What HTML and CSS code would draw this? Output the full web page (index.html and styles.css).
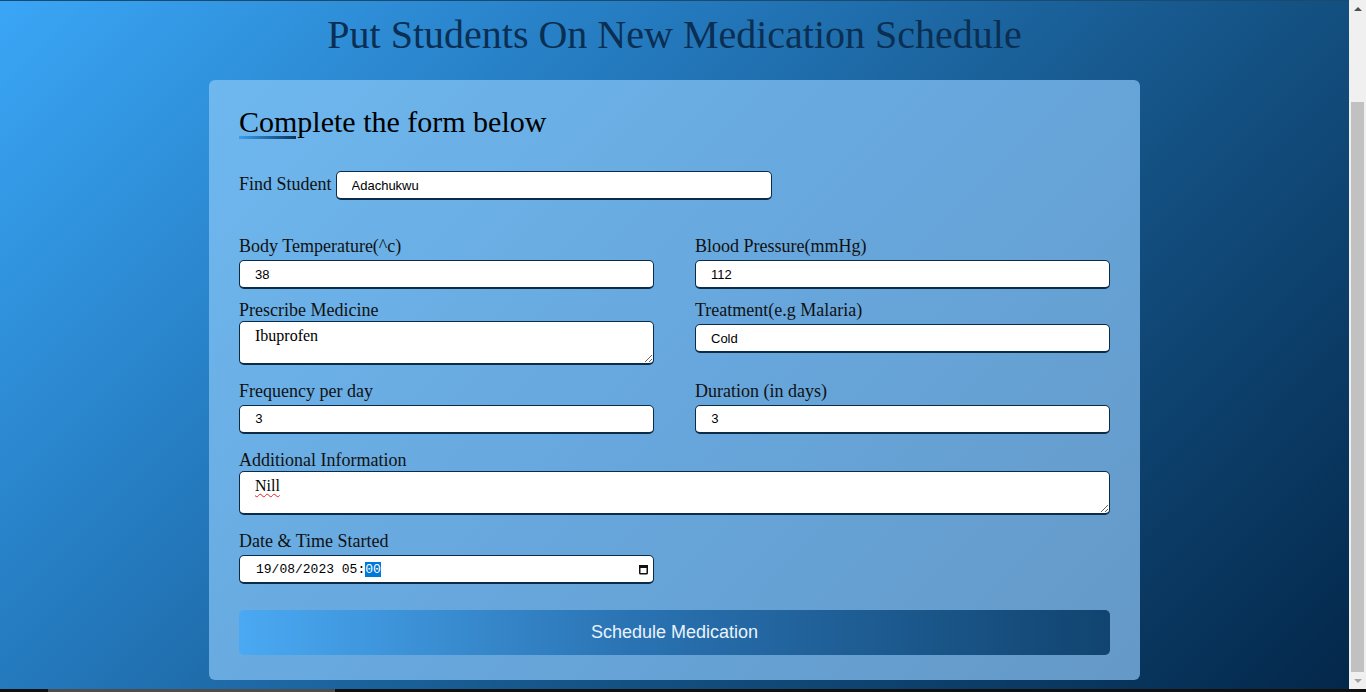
FILE: index.html
```html
<!DOCTYPE html>
<html lang="en">
<head>
<meta charset="utf-8">
<title>Put Students On New Medication Schedule</title>
<link rel="stylesheet" href="styles.css">
</head>
<body>
<div class="window">
  <main class="page">
    <h1 class="title">Put Students On New Medication Schedule</h1>
    <form class="card">
      <h2 class="card-title">Complete the form below</h2>
      <div class="title-bar"></div>

      <div class="find-row">
        <label class="find-label">Find Student</label>
        <input class="input find-input" type="text" value="Adachukwu">
      </div>

      <div class="row row-1">
        <div class="field">
          <label class="label">Body Temperature(^c)</label>
          <input class="input" type="text" value="38">
        </div>
        <div class="field">
          <label class="label">Blood Pressure(mmHg)</label>
          <input class="input" type="text" value="112">
        </div>
      </div>

      <div class="row row-2">
        <div class="field">
          <label class="label">Prescribe Medicine</label>
          <textarea class="textarea">Ibuprofen</textarea>
        </div>
        <div class="field">
          <label class="label">Treatment(e.g Malaria)</label>
          <input class="input" type="text" value="Cold">
        </div>
      </div>

      <div class="row row-3">
        <div class="field">
          <label class="label">Frequency per day</label>
          <input class="input mono" type="text" value="3">
        </div>
        <div class="field">
          <label class="label">Duration (in days)</label>
          <input class="input mono" type="text" value="3">
        </div>
      </div>

      <div class="row-single row-4">
        <label class="label">Additional Information</label>
        <textarea class="textarea misspelt">Nill</textarea>
      </div>

      <div class="row row-5">
        <div class="field">
          <label class="label">Date &amp; Time Started</label>
          <div class="input date-input">
            <span class="date-text">19/08/2023 05:<span class="date-sel">00</span></span>
            <svg class="cal-icon" width="11" height="12" viewBox="0 0 11 12" aria-hidden="true">
              <rect x="1.75" y="2.75" width="7.5" height="8" rx="0.8" fill="none" stroke="#111" stroke-width="1.5"/>
              <rect x="1" y="2" width="9" height="3" fill="#111"/>
            </svg>
          </div>
        </div>
        <div></div>
      </div>

      <button class="submit" type="button">Schedule Medication</button>
    </form>
  </main>
  <div class="scrollbar">
    <div class="sb-btn"><span class="arrow-up"></span></div>
    <div class="sb-track"><div class="sb-thumb"></div></div>
    <div class="sb-btn"><span class="arrow-down"></span></div>
  </div>
</div>
<div class="taskbar"><div class="taskbar-seg"></div></div>
</body>
</html>
```

FILE: styles.css
```css
html, body {
  margin: 0;
  padding: 0;
  height: 692px;
  overflow: hidden;
}

body {
  display: flex;
  flex-direction: column;
  font-family: "Liberation Serif", "Times New Roman", serif;
}

.window {
  flex: 1;
  display: flex;
  min-height: 0;
}

.page {
  flex: 1;
  min-width: 0;
  border-top: 1px solid #1b4a70;
  background: linear-gradient(135deg, #3aa6f6 0%, #2479bd 34%, #155487 62%, #03274a 100%);
  overflow: hidden;
}

.title {
  margin: 11px 0 22px;
  font-size: 40px;
  font-weight: normal;
  line-height: 46px;
  text-align: center;
  color: #0a2f52;
}

.card {
  width: 931px;
  box-sizing: border-box;
  margin: 0 auto;
  padding: 27px 30px 25px;
  border-radius: 6px;
  background: linear-gradient(135deg, #6eb8ef 0%, #67a7dd 50%, #6599c7 100%);
}

.card-title {
  margin: 0;
  font-size: 30px;
  font-weight: normal;
  line-height: 30px;
  color: #000;
}

.title-bar {
  width: 57px;
  height: 3px;
  margin-top: -1px;
  background: linear-gradient(to right, #3a9ef0, #0b3358);
}

.find-row {
  display: flex;
  align-items: flex-start;
  margin-top: 32px;
}

.find-label {
  padding-top: 3px;
  margin-right: 4px;
  font-size: 18px;
  line-height: 21px;
  color: #111;
}

.input {
  display: block;
  box-sizing: border-box;
  width: 100%;
  height: 29px;
  margin: 3px 0 0;
  padding: 0 15px;
  border: 1px solid #0b2b47;
  border-bottom-width: 2px;
  border-radius: 5px;
  background: #fff;
  font-family: "Liberation Sans", Arial, sans-serif;
  font-size: 13px;
  color: #000;
  outline: none;
}

.find-input {
  width: 436px;
  margin-top: 0;
}

.mono {
  font-family: "Liberation Mono", "DejaVu Sans Mono", monospace;
  font-size: 13px;
}

.row {
  display: grid;
  grid-template-columns: 1fr 1fr;
  column-gap: 41px;
}

.field {
  display: flex;
  flex-direction: column;
}

.label {
  display: block;
  font-size: 18px;
  line-height: 21px;
  color: #111;
}

.row-1 { margin-top: 36px; }
.row-2 { margin-top: 11px; }
.row-3 { margin-top: 16px; }
.row-4 { margin-top: 16px; }
.row-5 { margin-top: 16px; }

.textarea {
  display: block;
  box-sizing: border-box;
  width: 100%;
  height: 44px;
  margin: 0;
  padding: 5px 15px 3px;
  border: 1px solid #0b2b47;
  border-bottom-width: 2px;
  border-radius: 5px;
  background: #fff;
  font-family: "Liberation Serif", "Times New Roman", serif;
  font-size: 16px;
  color: #000;
  outline: none;
}

.misspelt {
  text-decoration: underline wavy #e0262a;
  text-decoration-thickness: 1px;
  text-underline-offset: 2px;
}

.date-input {
  display: flex;
  align-items: center;
  justify-content: space-between;
  padding: 0 4px 0 16px;
  font-family: "Liberation Mono", "DejaVu Sans Mono", monospace;
  font-size: 13px;
}

.date-text {
  white-space: pre;
  line-height: 13px;
}

.date-sel {
  background: #0078d7;
  color: #fff;
}

.cal-icon {
  display: block;
}

.submit {
  display: block;
  width: 100%;
  height: 45px;
  margin-top: 26px;
  border: none;
  border-radius: 5px;
  background: linear-gradient(to right, #4aa9f2 0%, #2a73b3 45%, #114470 100%);
  color: #e8f3fc;
  font-family: "Liberation Sans", Arial, sans-serif;
  font-size: 18px;
  cursor: pointer;
}

.scrollbar {
  width: 17px;
  display: flex;
  flex-direction: column;
  background: #f0f0f0;
}

.sb-btn {
  height: 17px;
  display: flex;
  align-items: center;
  justify-content: center;
}

.arrow-up {
  width: 0;
  height: 0;
  border-left: 4px solid transparent;
  border-right: 4px solid transparent;
  border-bottom: 4px solid #505050;
}

.arrow-down {
  width: 0;
  height: 0;
  border-left: 4px solid transparent;
  border-right: 4px solid transparent;
  border-top: 4px solid #a3a3a3;
}

.sb-track {
  flex: 1;
  display: flex;
  flex-direction: column;
  padding: 85px 2px 0;
}

.sb-thumb {
  flex: 1;
  background: #c1c1c1;
}

.taskbar {
  height: 3px;
  background: #101010;
  display: flex;
}

.taskbar-seg {
  width: 287px;
  margin-left: 48px;
  background: #4d4d4d;
}
```
